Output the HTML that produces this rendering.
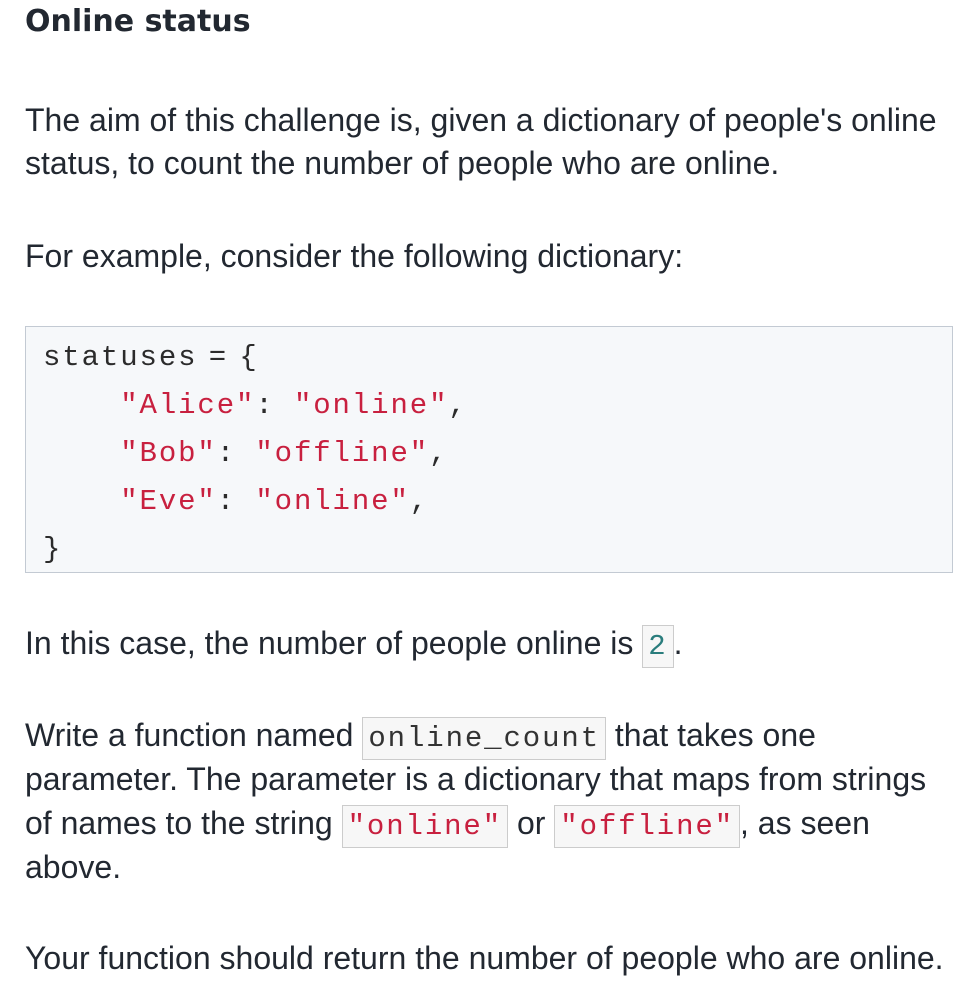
<!DOCTYPE html>
<html><head><meta charset="utf-8"><style>
body{margin:0;width:968px;height:1004px;background:#fff;color:#222831;font-family:"Liberation Sans",Arial,sans-serif;position:relative;overflow:hidden}
.a{position:absolute;left:25px;margin:0}
h1{font-family:"DejaVu Sans","Liberation Sans",sans-serif;font-weight:bold;font-size:30px;line-height:44px}
p{font-size:32px;line-height:44px;white-space:nowrap}
.mono{font-family:"Liberation Mono","DejaVu Sans Mono",monospace;font-size:29px;letter-spacing:1.9px;line-height:1}
pre{position:absolute;left:25px;top:326px;width:928px;height:247px;margin:0;background:#f6f8fa;border:1px solid #c3cad3;box-sizing:border-box;padding:7px 0 0 17px;line-height:48px !important;color:#2b2b2b}
.s{color:#c8203f}
code{background:#f7f7f7;border:1px solid #cccccc;padding:4px 5px;color:#333}
code.s{color:#c8203f}
code.n{color:#2a7d7d}
</style></head><body>
<h1 class="a" style="top:0">Online status</h1>
<p class="a" style="top:99px;line-height:43px">The aim of this challenge is, given a dictionary of people's online<br>status, to count the number of people who are online.</p>
<p class="a" style="top:234px">For example, consider the following dictionary:</p>
<pre class="mono"><span style="word-spacing:-8px">statuses = {</span>
    <span class="s">"Alice"</span>: <span class="s">"online"</span>,
    <span class="s">"Bob"</span>: <span class="s">"offline"</span>,
    <span class="s">"Eve"</span>: <span class="s">"online"</span>,
}</pre>
<p class="a" style="top:621px">In this case, the number of people online is <code class="mono n">2</code>.</p>
<p class="a" style="top:713px">Write a function named <code class="mono">online_count</code> that takes one<br>parameter. The parameter is a dictionary that maps from strings<br>of names to the string <code class="mono s">"online"</code> or <code class="mono s">"offline"</code>, as seen<br>above.</p>
<p class="a" style="top:936px">Your function should return the number of people who are online.</p>
</body></html>
